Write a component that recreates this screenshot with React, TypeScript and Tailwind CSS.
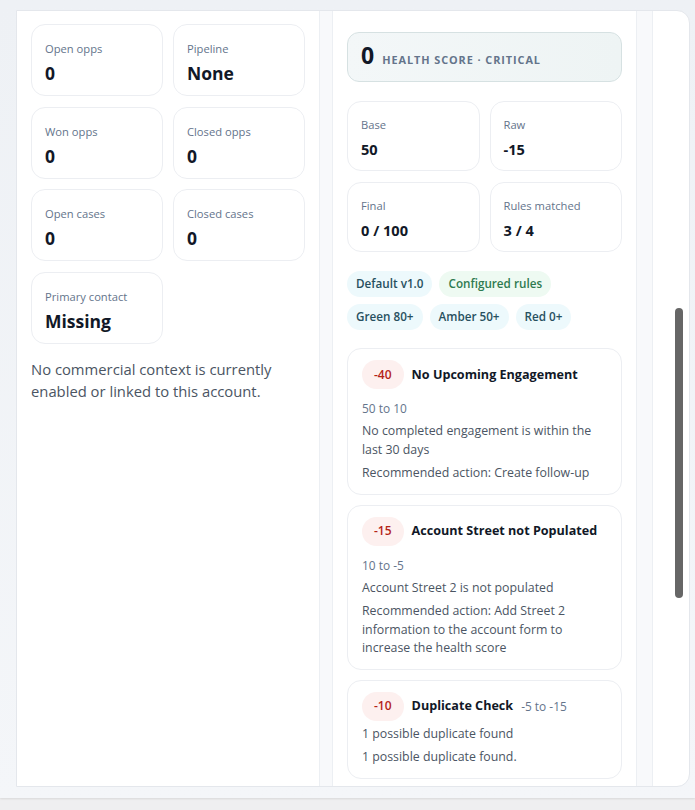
import React from "react";

const FONT = { fontFamily: '"Open Sans", "Noto Sans", sans-serif' };

function Stat({ label, value }: { label: string; value: string }) {
  return (
    <div className="h-[72px] rounded-[14px] border border-[#eceef2] bg-white px-[13px] pt-[14px]">
      <div className="text-[11.2px] leading-[20px] text-[#64748b]">{label}</div>
      <div className="mt-[2px] text-[17.5px] font-bold leading-[24px] text-[#111827]">{value}</div>
    </div>
  );
}

function ScoreStat({ label, value }: { label: string; value: string }) {
  return (
    <div className="h-[70px] rounded-[14px] border border-[#eceef2] bg-white px-[13px] pt-[14px]">
      <div className="text-[11.2px] leading-[18px] text-[#64748b]">{label}</div>
      <div className="mt-[5px] text-[14.6px] font-bold leading-[20px] text-[#111827]">{value}</div>
    </div>
  );
}

function Chip({ children, tone = "cyan" }: { children: React.ReactNode; tone?: "cyan" | "green" }) {
  return (
    <span
      className={
        tone === "green"
          ? "inline-flex h-[26px] items-center rounded-full bg-[#eefaf2] px-[9px] text-[11.7px] font-semibold text-[#2f7a50]"
          : "inline-flex h-[26px] items-center rounded-full bg-[#edf9fc] px-[9px] text-[11.7px] font-semibold text-[#27505f]"
      }
    >
      {children}
    </span>
  );
}

function Rule({
  delta,
  title,
  range,
  lines,
}: {
  delta: string;
  title: string;
  range: string;
  lines: string[];
}) {
  return (
    <div className="rounded-[14px] border border-[#eceef2] bg-white px-[14px] pt-[11px] pb-[11px]">
      <div className="flex flex-wrap items-center gap-x-[8px] gap-y-[9px]">
        <span className="inline-flex h-[29px] items-center rounded-full bg-[#fdf0ef] px-[12px] text-[12px] font-semibold text-[#b42318]">
          {delta}
        </span>
        <span className="text-[12.6px] font-bold leading-[20px] text-[#111827]">{title}</span>
        <span className="text-[11.9px] leading-[20px] text-[#64748b]">{range}</span>
      </div>
      <div className="mt-[4px] flex flex-col gap-[5px]">
        {lines.map((l, i) => (
          <p key={i} className="text-[12.35px] leading-[18.5px] text-[#4b5563]">
            {l}
          </p>
        ))}
      </div>
    </div>
  );
}

export default function App() {
  return (
    <div className="h-[810px] w-[695px] overflow-hidden bg-[#efeff0]" style={FONT}>
      <div className="h-[798px] bg-gradient-to-b from-[#eef1f5] to-[#f4f6f9] pl-[16px] pr-[5px] pt-[10px] shadow-[0_1px_2px_rgba(0,0,0,0.10)]">
        <div className="flex h-[777px] overflow-hidden rounded-r-[13px] border border-[#e4e7ec] bg-white">
          {/* Column 1 */}
          <div className="w-[303px] shrink-0 border-r border-[#eceff3] px-[14px] pt-[13px]">
            <div className="grid grid-cols-2 gap-x-[10px] gap-y-[10.7px]">
              <Stat label="Open opps" value="0" />
              <Stat label="Pipeline" value="None" />
              <Stat label="Won opps" value="0" />
              <Stat label="Closed opps" value="0" />
              <Stat label="Open cases" value="0" />
              <Stat label="Closed cases" value="0" />
              <Stat label="Primary contact" value="Missing" />
            </div>
            <p className="mt-[14px] text-[14.8px] leading-[22.4px] text-[#4b5563]">
              No commercial context is currently enabled or linked to this account.
            </p>
          </div>

          {/* Gap 1 */}
          <div className="w-[13px] shrink-0 border-r border-[#eceff3] bg-[#f8f9fb]" />

          {/* Column 2 */}
          <div className="w-[304px] shrink-0 overflow-hidden border-r border-[#eceff3] px-[14px] pt-[21px]">
            <div className="flex h-[50px] items-baseline gap-[8px] rounded-[12px] border border-[#d6e1e2] bg-gradient-to-r from-[#f3f7f8] to-[#eef4f4] px-[13px] pt-[6px]">
              <span className="text-[23px] font-bold leading-[32px] text-[#111827]">0</span>
              <span className="text-[10.9px] font-bold uppercase tracking-[0.085em] text-[#64748b]">
                Health score · Critical
              </span>
            </div>

            <div className="mt-[19px] grid grid-cols-2 gap-x-[10px] gap-y-[11px]">
              <ScoreStat label="Base" value="50" />
              <ScoreStat label="Raw" value="-15" />
              <ScoreStat label="Final" value="0 / 100" />
              <ScoreStat label="Rules matched" value="3 / 4" />
            </div>

            <div className="mt-[19px] flex flex-wrap gap-x-[7px] gap-y-[7px]">
              <Chip>Default v1.0</Chip>
              <Chip tone="green">Configured rules</Chip>
              <Chip>Green 80+</Chip>
              <Chip>Amber 50+</Chip>
              <Chip>Red 0+</Chip>
            </div>

            <div className="mt-[18px] flex flex-col gap-[10px]">
              <Rule
                delta="-40"
                title="No Upcoming Engagement"
                range="50 to 10"
                lines={["No completed engagement is within the last 30 days", "Recommended action: Create follow-up"]}
              />
              <Rule
                delta="-15"
                title="Account Street not Populated"
                range="10 to -5"
                lines={[
                  "Account Street 2 is not populated",
                  "Recommended action: Add Street 2 information to the account form to increase the health score",
                ]}
              />
              <Rule
                delta="-10"
                title="Duplicate Check"
                range="-5 to -15"
                lines={["1 possible duplicate found", "1 possible duplicate found."]}
              />
            </div>
          </div>

          {/* Gap 2 */}
          <div className="w-[16px] shrink-0 border-r border-[#eceff3] bg-[#f8f9fb]" />

          {/* Column 3 with scrollbar */}
          <div className="flex-1 pl-[22px] pt-[297px]">
            <div className="h-[290px] w-[8px] rounded-full bg-[#666666]" />
          </div>
        </div>
      </div>
    </div>
  );
}
